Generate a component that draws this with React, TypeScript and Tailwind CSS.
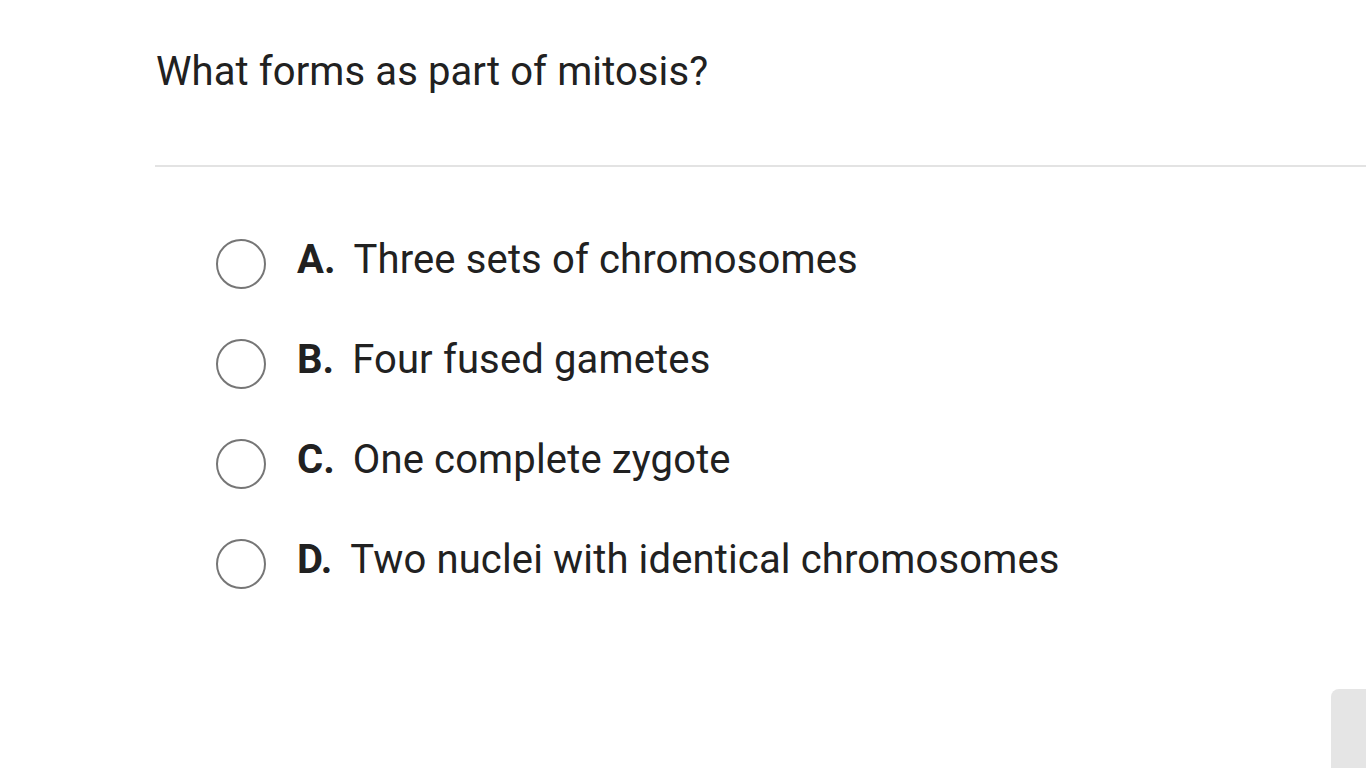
const OPTIONS = [
  { letter: "A.", text: "Three sets of chromosomes" },
  { letter: "B.", text: "Four fused gametes" },
  { letter: "C.", text: "One complete zygote" },
  { letter: "D.", text: "Two nuclei with identical chromosomes" },
];

export default function App() {
  return (
    <main
      className="relative h-[768px] w-[1366px] overflow-hidden bg-white text-[#212121]"
      style={{ fontFamily: "Roboto, 'Liberation Sans', sans-serif" }}
    >
      <div className="pl-[155px] pt-[48px]">
        <h1 className="pl-px text-[40px] leading-[48px] font-normal tracking-[0.1px]">
          What forms as part of mitosis?
        </h1>
        <div className="mt-[69px] h-[2px] bg-[#e3e3e3]" />
      </div>

      <ul className="mt-[72px] flex flex-col gap-[50px] pl-[216px]">
        {OPTIONS.map((opt) => (
          <li key={opt.letter} className="flex h-[50px] items-center">
            <span className="h-[50px] w-[50px] shrink-0 rounded-full border-2 border-[#767676]" />
            <span className="ml-[31px] -mt-[8px] text-[40px] font-bold">{opt.letter}</span>
            <span className="ml-[18px] -mt-[8px] text-[40px] tracking-[0.14px]">{opt.text}</span>
          </li>
        ))}
      </ul>

      <div className="absolute bottom-0 right-0 h-[79px] w-[35px] rounded-tl-[8px] bg-[#e5e5e5]" />
    </main>
  );
}
